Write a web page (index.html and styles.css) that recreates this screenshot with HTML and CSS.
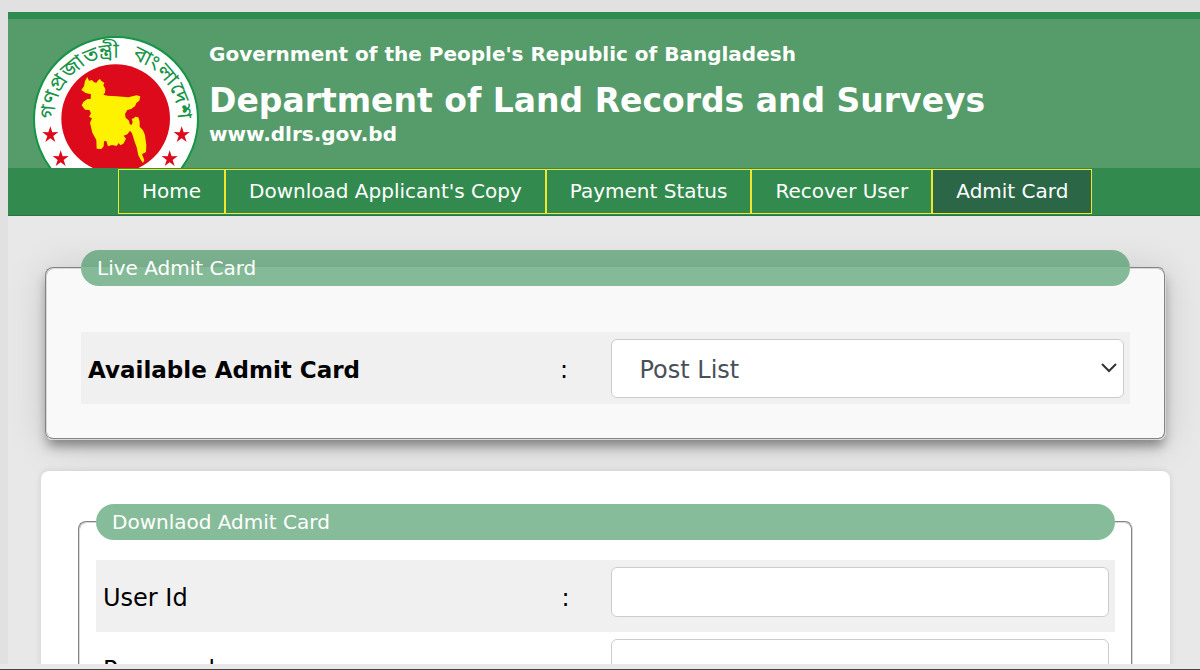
FILE: index.html
```
<!DOCTYPE html>
<html lang="en">
<head>
    <meta charset="UTF-8">
    <meta name="viewport" content="width=device-width, initial-scale=1.0">
    <title>Department of Land Records and Surveys</title>
    <link rel="stylesheet" href="styles.css">
</head>
<body>
    <div class="page">
        <header class="header">
            <div class="banner">
                <svg class="logo" viewBox="39 18 498 498" role="img" aria-label="Government seal">
                    <defs>
                        <path id="ring" d="M103 268 A185 185 0 0 1 473 268"/>
                        <path id="star" d="M0 -25 L6 -7 L24 -8 L9 4 L15 22 L0 11 L-15 22 L-9 4 L-24 -8 L-6 -7 Z"/>
                    </defs>
                    <circle cx="288" cy="267" r="246" fill="#fff" stroke="#169447" stroke-width="6"/>
                    <circle cx="287" cy="266" r="163" fill="#dc0a1b"/>
                    <path fill="#fff200" d="M202 141 L207 152 L216 150 L222 157 L229 158 L235 150 L240 147 L244 153 L253 158 L250 166 L256 177 L255 188 L250 194 L262 197 L290 199 L325 202 L350 196 L361 199 L358 212 L349 219 L345 229 L333 237 L322 240 L315 252 L317 263 L327 272 L329 282 L335 285 L338 276 L335 267 L343 264 L345 260 L355 262 L359 275 L359 290 L369 301 L375 316 L379 346 L378 366 L366 373 L373 391 L369 399 L362 389 L355 376 L350 352 L344 335 L336 310 L330 302 L322 313 L311 317 L318 326 L310 341 L301 346 L296 339 L290 348 L276 345 L264 349 L259 333 L252 334 L251 349 L244 357 L230 356 L229 330 L217 308 L210 278 L216 265 L207 260 L213 250 L208 240 L195 239 L185 226 L190 216 L202 207 L212 207 L213 193 L197 189 L184 180 L192 169 L195 153 Z"/>
                    <g fill="#dc0a1b">
                        <use href="#star" x="91" y="314"/>
                        <use href="#star" x="122" y="386"/>
                        <use href="#star" x="485" y="314"/>
                        <use href="#star" x="449" y="386"/>
                    </g>
                    <text class="seal-text"><textPath href="#ring">গণপ্রজাতন্ত্রী</textPath></text>
                    <text class="seal-text" text-anchor="end"><textPath href="#ring" startOffset="100%">বাংলাদেশ</textPath></text>
                </svg>
                <div class="titles">
                    <p class="gov">Government of the People's Republic of Bangladesh</p>
                    <h1 class="dept">Department of Land Records and Surveys</h1>
                    <p class="site">www.dlrs.gov.bd</p>
                </div>
            </div>
            <nav class="menu">
                <a href="#">Home</a>
                <a href="#">Download Applicant's Copy</a>
                <a href="#">Payment Status</a>
                <a href="#">Recover User</a>
                <a href="#" class="active">Admit Card</a>
            </nav>
        </header>

        <main class="content">
            <!-- Live admit card -->
            <fieldset class="live">
                <legend>Live Admit Card</legend>
                <div class="row">
                    <label for="post" class="strong">Available Admit Card</label>
                    <span>:</span>
                    <select id="post">
                        <option>Post List</option>
                    </select>
                </div>
            </fieldset>

            <!-- Download form -->
            <form class="card">
                <fieldset class="download">
                    <legend>Downlaod Admit Card</legend>
                    <div class="row">
                        <label for="user">User Id</label>
                        <span>:</span>
                        <input type="text" id="user">
                    </div>
                    <div class="row">
                        <label for="password">Password</label>
                        <span>:</span>
                        <input type="password" id="password">
                    </div>
                </fieldset>
            </form>
        </main>
    </div>
    <div class="bottom-bar"></div>
</body>
</html>
```
FILE: styles.css
```
* {
    box-sizing: border-box;
}

body {
    font-family: Verdana, "DejaVu Sans", sans-serif;
    font-size: 24px;
    color: #000;
    background-color: #e1e1e1;
    margin: 0;
    height: 100vh;
    display: flex;
    flex-direction: column;
    overflow: hidden;
}

.page {
    flex: 1;
    min-height: 0;
    margin: 12px 0 0 8px;
    background-color: #e8e8e8;
    overflow: hidden;
}

.header {
    border-top: 7px solid #2e8b4f;
    background-color: #559c6a;
    color: white;
}

.banner {
    display: flex;
    gap: 10px;
    height: 149px;
    padding: 17px 25px 0;
    overflow: hidden;
}

.logo {
    width: 166px;
    height: 166px;
    flex-shrink: 0;
}

.seal-text {
    font-family: "Noto Sans Bengali", "Noto Sans", sans-serif;
    font-size: 63px;
    fill: #169447;
}

.titles {
    padding-top: 6px;
    font-weight: bold;
    white-space: nowrap;
}

.titles p {
    margin: 0;
    font-size: 20px;
    line-height: 24px;
}

.titles .dept {
    margin: 15px 0 1px;
    font-size: 33px;
    line-height: 40px;
}

.menu {
    display: flex;
    height: 48px;
    padding: 1px 0 1px 110px;
    background-color: #338a4f;
    border-bottom: 1px solid #2a7344;
}

.menu a {
    border: 1px solid #f0e62e;
    padding: 0 23px;
    font-size: 20px;
    line-height: 43px;
    color: white;
    text-decoration: none;
    white-space: nowrap;
}

.menu a:hover,
.menu a.active {
    background-color: #2b6747;
}

.content {
    padding: 34px 30px 0 33px;
}

fieldset {
    margin: 0;
    min-width: 0;
    border: 2px groove #d8d8d8;
    border-radius: 8px;
}

legend {
    width: 100%;
    padding: 0 16px;
    border-radius: 18px;
    background-color: rgba(46, 139, 79, 0.58);
    color: white;
    font-size: 20px;
    line-height: 36px;
}

.live {
    margin: 0 4px 31px;
    padding: 46px 34px 34px;
    background-color: #f9f9f9;
    box-shadow: 0 8px 12px -2px rgba(0, 0, 0, 0.4), 0 4px 40px rgba(0, 0, 0, 0.14);
}

.card {
    height: 400px;
    padding: 33px 37px;
    background-color: white;
    border-radius: 8px;
    box-shadow: 0 0 6px rgba(0, 0, 0, 0.12);
}

.download {
    height: 340px;
    padding: 20px 16px;
}

.row {
    display: grid;
    grid-template-columns: 45% 5% 50%;
    align-items: center;
    height: 72px;
}

.row:nth-of-type(odd) {
    background-color: #f0f0f0;
}

.row label,
.row span {
    padding: 4px 7px 0;
}

.row .strong {
    font-size: 23px;
    font-weight: bold;
}

.row input,
.row select {
    margin: 0 6px;
    border: 1px solid #cccccc;
    border-radius: 6px;
    background-color: white;
    font: inherit;
    color: #495057;
}

.row input {
    height: 50px;
    align-self: start;
    margin-top: 7px;
    padding: 0 20px;
}

.row select {
    height: 59px;
    padding: 3px 27px 0;
    appearance: none;
    background-image: url("data:image/svg+xml,%3Csvg xmlns='http://www.w3.org/2000/svg' width='16' height='10'%3E%3Cpath d='M1 1l7 7 7-7' fill='none' stroke='%23333' stroke-width='2'/%3E%3C/svg%3E");
    background-repeat: no-repeat;
    background-position: right 6px center;
}

.bottom-bar {
    height: 6px;
    background-color: #e8e8e8;
    border-bottom: 1px solid #444;
}
```
